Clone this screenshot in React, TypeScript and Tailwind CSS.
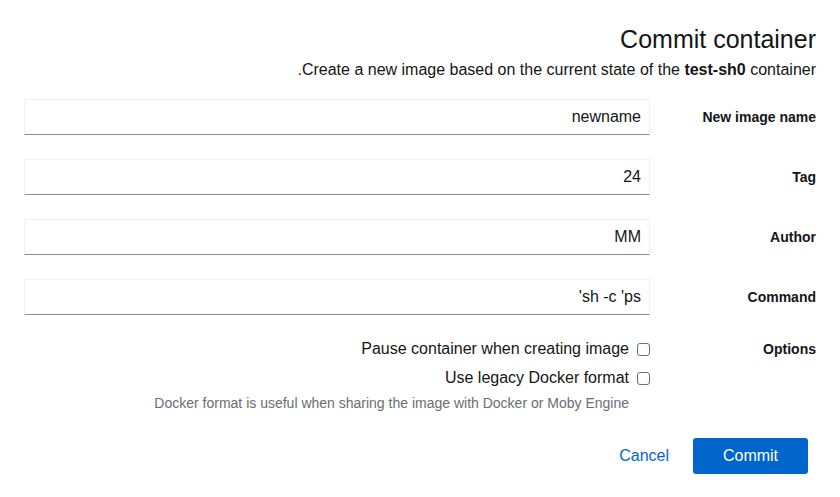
const font = { fontFamily: '"Liberation Sans", Arial, sans-serif' };

function Field({ label, value }: { label: string; value: string }) {
  return (
    <div className="flex items-center gap-4">
      <label className="w-[150px] shrink-0 text-start text-[14px] font-bold text-[#151515]">
        {label}
      </label>
      <div className="flex h-9 flex-1 items-center border border-[#f0f0f0] border-b-[#8a8d90] px-2 text-[16px] text-[#151515]">
        {value}
      </div>
    </div>
  );
}

function Check({ label }: { label: string }) {
  return (
    <label className="flex h-6 items-center gap-2 text-[16px] text-[#151515]">
      <span className="h-[13px] w-[13px] rounded-[3px] border border-[#6a6e73] bg-white" />
      {label}
    </label>
  );
}

export default function App() {
  return (
    <div dir="rtl" style={font} className="h-[497px] w-[840px] bg-white px-6 pt-6">
      <h1 className="h-[30px] text-[25px] leading-[30px] text-[#151515]">Commit container</h1>
      <p className="mt-1 text-[16px] leading-6 text-[#151515]">
        Create a new image based on the current state of the <b>test-sh0</b> container.
      </p>
      <div className="mt-[17px] flex flex-col gap-6">
        <Field label="New image name" value="newname" />
        <Field label="Tag" value="24" />
        <Field label="Author" value="MM" />
        <Field label="Command" value="sh -c 'ps'" />
      </div>
      <div className="mt-[22px] flex gap-4">
        <div className="w-[150px] shrink-0 text-[14px] font-bold leading-6 text-[#151515]">
          Options
        </div>
        <div className="flex flex-col gap-[5px]">
          <Check label="Pause container when creating image" />
          <Check label="Use legacy Docker format" />
          <div className="-mt-[2px] ps-[21px] text-[14px] leading-5 text-[#6a6e73]">
            Docker format is useful when sharing the image with Docker or Moby Engine
          </div>
        </div>
      </div>
      <div className="mt-[25px] flex gap-2 ps-2">
        <button className="h-9 w-[115px] rounded-[3px] bg-[#0066cc] text-[16px] text-white">
          Commit
        </button>
        <button className="h-9 px-4 text-[16px] text-[#0066cc]">Cancel</button>
      </div>
    </div>
  );
}
